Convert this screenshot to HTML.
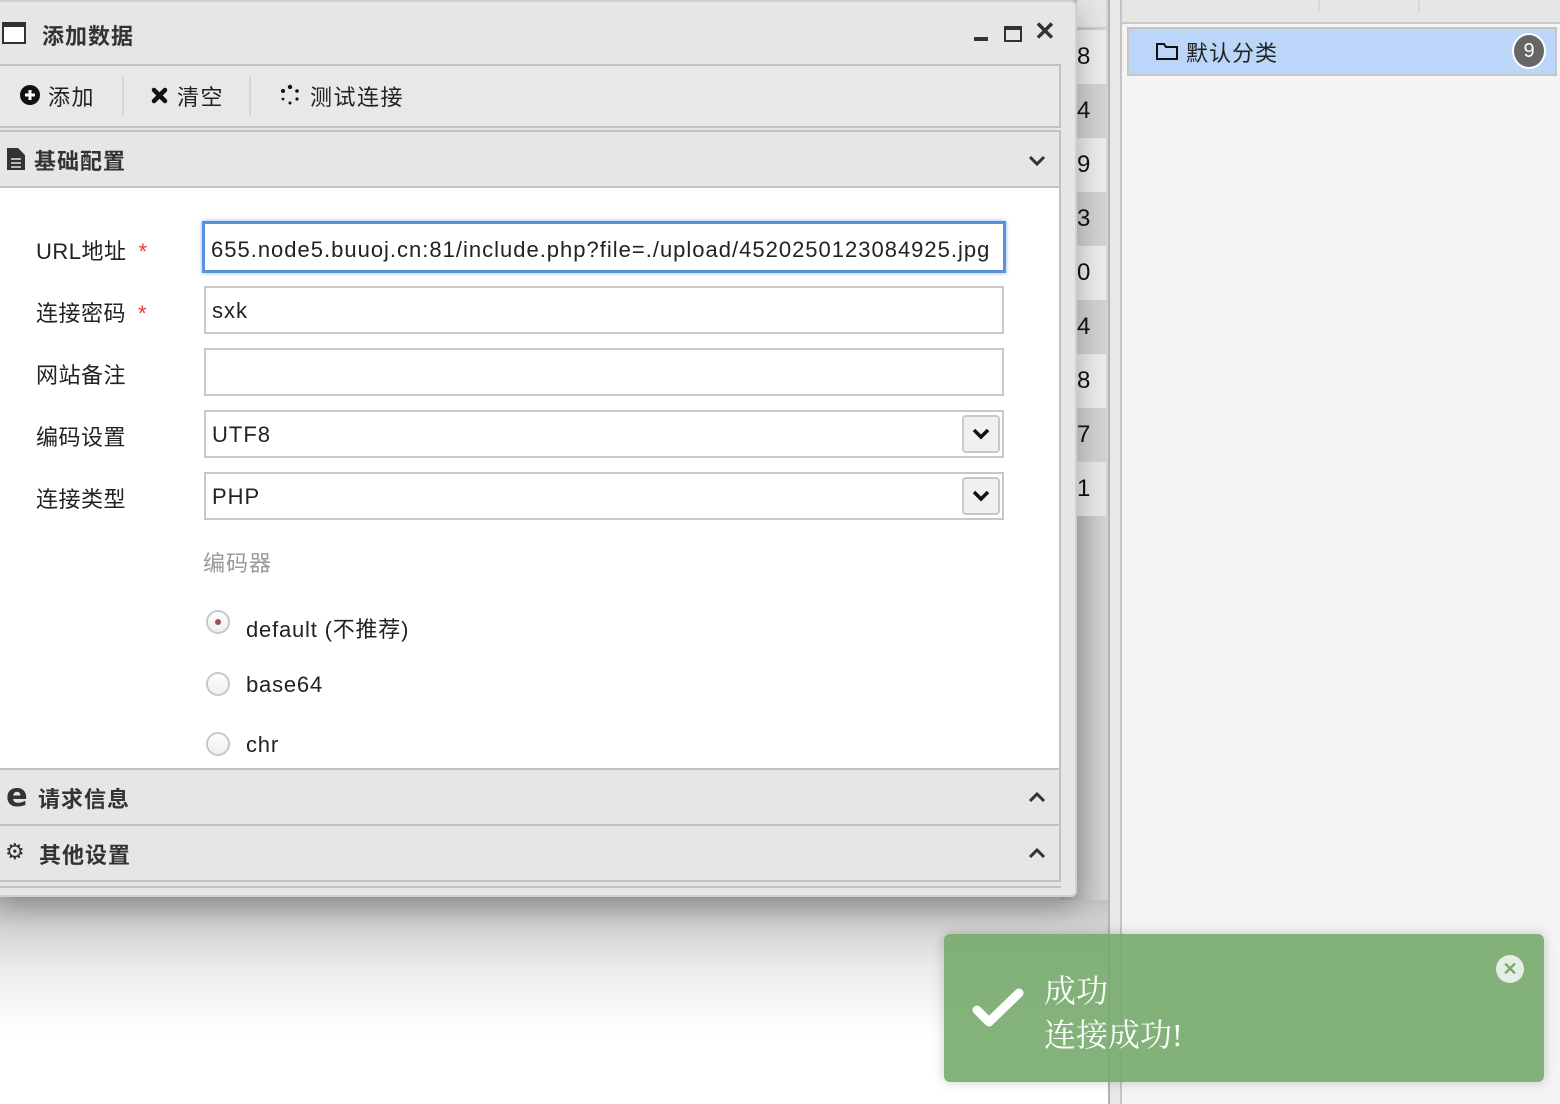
<!DOCTYPE html>
<html><head><meta charset="utf-8"><style>
*{box-sizing:border-box;margin:0;padding:0}
body{width:1560px;height:1104px;overflow:hidden;position:relative;background:#fff;font-family:"Liberation Sans","Noto Sans CJK SC",sans-serif;color:#222}
.a{position:absolute}
.lbl{position:absolute;left:36px;font-size:22px;color:#222;letter-spacing:0.5px}
.star{color:#e53935;margin-left:12px}
.inp{position:absolute;left:204px;width:800px;height:48px;border:2px solid #c8c8c8;background:#fff;font-size:22px;padding-left:6px;line-height:46px;white-space:nowrap;overflow:hidden;letter-spacing:1px}
.sb{position:absolute;right:2px;top:3px;width:38px;height:38px;border:2px solid #c8c8c8;border-radius:4px;background:#f0f0f0}
.radio{position:absolute;left:206px;width:24px;height:24px;border-radius:50%;border:2px solid #c8c8c8;background:linear-gradient(#fff,#eee)}
.rt{position:absolute;left:246px;font-size:22px;letter-spacing:0.8px}
.hdr{position:absolute;left:0;width:1061px;background:#e6e6e6;border:2px solid #c2c2c2;border-left:none}
</style></head><body>
<div class="a" style="left:0;top:880px;width:1108px;height:224px;background:linear-gradient(#b8b8b8,#ececec 40%,#fff 70%)"></div>
<div class="a" style="left:1060px;top:0;width:48px;height:900px;background:linear-gradient(90deg,#b0b0b0,#d6d6d6)"></div>
<div class="a" style="left:1077px;top:0;width:29px;height:28px;background:#e6e6e6;border-bottom:1px solid #ccc"></div>
<div class="a" style="left:1077px;top:30px;width:29px;height:480px;font-size:24px;line-height:54px;color:#111">
<div style="background:#ececec">8</div><div style="background:#d2d2d2">4</div><div style="background:#ececec">9</div><div style="background:#d2d2d2">3</div><div style="background:#ececec">0</div><div style="background:#d2d2d2">4</div><div style="background:#ececec">8</div><div style="background:#d2d2d2">7</div><div style="background:#e8e8e8">1</div>
</div>
<div class="a" style="left:1108px;top:0;width:14px;height:1104px;background:#e8e8e8;border-left:2px solid #b4b4b4;border-right:2px solid #c4c4c4"></div>
<div class="a" style="left:1122px;top:0;width:438px;height:1104px;background:#f4f4f4"></div>
<div class="a" style="left:1122px;top:0;width:438px;height:24px;background:#e6e6e6;border-bottom:2px solid #c8c8c8"></div>
<div class="a" style="left:1318px;top:0;width:2px;height:12px;background:#cdd"></div>
<div class="a" style="left:1418px;top:0;width:2px;height:12px;background:#cdd"></div>
<div class="a" style="left:1127px;top:27px;width:430px;height:49px;background:#bbd6f8;border:2px solid #c6c6c6"></div>
<svg class="a" style="left:1155px;top:41px" width="24" height="20"><path d="M2 3h7l2 3h11v12H2z" fill="none" stroke="#111" stroke-width="2"/></svg>
<div class="a" style="left:1186px;top:36px;font-size:22px;letter-spacing:1px">默认分类</div>
<div class="a" style="left:1512px;top:33px;width:34px;height:36px;border-radius:50%;background:#666;border:2px solid #fff;color:#fff;font-size:20px;text-align:center;line-height:32px">9</div>

<div class="a" style="left:-4px;top:0;width:1081px;height:897px;background:#e6e6e6;border:2px solid #d0d0d0;border-radius:0 6px 6px 0;box-shadow:0 10px 30px rgba(0,0,0,.3)"></div>
<div class="a" style="left:2px;top:22px;width:24px;height:22px;border:2px solid #333;border-top-width:5px;background:#fff"></div>
<div class="a" style="left:42px;top:19px;font-size:22px;color:#333;font-weight:bold;letter-spacing:1px">添加数据</div>
<div class="a" style="left:974px;top:37px;width:14px;height:4px;background:#333"></div>
<div class="a" style="left:1004px;top:26px;width:18px;height:16px;border:2px solid #333;border-top-width:4px"></div>
<div class="a" style="left:1034px;top:16px;font-size:26px;font-weight:bold;color:#333">✕</div>
<div class="hdr" style="top:64px;height:64px;background:#e8e8e8"></div>
<svg class="a" style="left:20px;top:85px" width="20" height="20"><circle cx="10" cy="10" r="10" fill="#111"/><path d="M10 5v10M5 10h10" stroke="#fff" stroke-width="3"/></svg>
<div class="a" style="left:48px;top:80px;font-size:22px;letter-spacing:1.5px">添加</div>
<div class="a" style="left:122px;top:76px;width:2px;height:40px;background:#cfd8de"></div>
<svg class="a" style="left:151px;top:87px" width="17" height="17"><path d="M3 3l11 11M14 3L3 14" stroke="#111" stroke-width="4.5" stroke-linecap="round"/></svg>
<div class="a" style="left:177px;top:80px;font-size:22px;letter-spacing:1.5px">清空</div>
<div class="a" style="left:249px;top:76px;width:2px;height:40px;background:#cfd8de"></div>
<svg class="a" style="left:279px;top:84px" width="22" height="22"><g fill="#111"><circle cx="11" cy="3" r="2.2"/><circle cx="18" cy="7" r="1.8"/><circle cx="18" cy="15" r="1.6"/><circle cx="11" cy="19" r="1.5"/><circle cx="4" cy="15" r="1.4"/><circle cx="4" cy="7" r="2"/></g></svg>
<div class="a" style="left:310px;top:80px;font-size:22px;letter-spacing:1.5px">测试连接</div>
<div class="hdr" style="top:130px;height:58px"></div>
<svg class="a" style="left:7px;top:148px" width="18" height="22"><path d="M0 0h11l7 7v15H0z" fill="#333"/><path d="M4 11h10M4 15h10M4 19h10" stroke="#e6e6e6" stroke-width="1.5"/></svg>
<div class="a" style="left:34px;top:144px;font-size:22px;font-weight:bold;color:#333;letter-spacing:1px">基础配置</div>
<svg class="a" style="left:1028px;top:155px" width="18" height="12"><path d="M2 2l7 7 7-7" fill="none" stroke="#333" stroke-width="3"/></svg>
<div class="a" style="left:0;top:188px;width:1061px;height:581px;background:#fff;border-right:2px solid #c2c2c2"></div>
<div class="lbl" style="top:234px">URL地址<span class="star">*</span></div>
<div class="inp" style="left:202px;top:221px;width:804px;height:52px;border:3px solid #5b8fe0;box-shadow:0 0 4px #8fb4f0;line-height:52px;padding-left:6px">655.node5.buuoj.cn:81/include.php?file=./upload/4520250123084925.jpg</div>
<div class="lbl" style="top:296px">连接密码<span class="star">*</span></div>
<div class="inp" style="top:286px">sxk</div>
<div class="lbl" style="top:358px">网站备注</div>
<div class="inp" style="top:348px"></div>
<div class="lbl" style="top:420px">编码设置</div>
<div class="inp" style="top:410px">UTF8<div class="sb"><svg width="34" height="34"><path d="M10 13l7 7 7-7" fill="none" stroke="#111" stroke-width="3.5"/></svg></div></div>
<div class="lbl" style="top:482px">连接类型</div>
<div class="inp" style="top:472px">PHP<div class="sb"><svg width="34" height="34"><path d="M10 13l7 7 7-7" fill="none" stroke="#111" stroke-width="3.5"/></svg></div></div>
<div class="a" style="left:203px;top:546px;font-size:22px;color:#999;letter-spacing:1px">编码器</div>
<div class="radio" style="top:610px"><div style="width:6px;height:6px;border-radius:50%;background:#a05050;margin:7px"></div></div>
<div class="rt" style="top:612px">default (不推荐)</div>
<div class="radio" style="top:672px"></div>
<div class="rt" style="top:672px">base64</div>
<div class="radio" style="top:732px"></div>
<div class="rt" style="top:732px">chr</div>
<div class="hdr" style="top:768px;height:58px"></div>
<div class="a" style="left:6px;top:776px;font-size:32px;font-weight:bold;color:#333;font-family:'DejaVu Sans',sans-serif">e</div>
<div class="a" style="left:38px;top:782px;font-size:22px;font-weight:bold;color:#333;letter-spacing:1px">请求信息</div>
<svg class="a" style="left:1028px;top:791px" width="18" height="12"><path d="M2 10l7-7 7 7" fill="none" stroke="#333" stroke-width="3"/></svg>
<div class="hdr" style="top:824px;height:58px"></div>
<div class="a" style="left:5px;top:840px;font-size:22px;color:#333;font-family:'DejaVu Sans',sans-serif">⚙</div>
<div class="a" style="left:39px;top:838px;font-size:22px;font-weight:bold;color:#333;letter-spacing:1px">其他设置</div>
<svg class="a" style="left:1028px;top:847px" width="18" height="12"><path d="M2 10l7-7 7 7" fill="none" stroke="#333" stroke-width="3"/></svg>
<div class="a" style="left:0;top:886px;width:1061px;height:2px;background:#c2c2c2"></div>

<div class="a" style="left:944px;top:934px;width:600px;height:148px;background:rgba(118,170,108,.9);border-radius:6px;box-shadow:0 0 12px rgba(0,0,0,.2)"></div>
<svg class="a" style="left:972px;top:988px" width="52" height="40"><path d="M5 22l12 12L47 5" fill="none" stroke="#fff" stroke-width="9" stroke-linecap="round" stroke-linejoin="round"/></svg>
<div class="a" style="left:1044px;top:966px;font-size:32px;color:#fff;font-family:'Liberation Serif','Noto Serif CJK SC',serif">成功</div>
<div class="a" style="left:1044px;top:1010px;font-size:32px;color:#fff;font-family:'Liberation Serif','Noto Serif CJK SC',serif">连接成功!</div>
<div class="a" style="left:1496px;top:955px;width:28px;height:28px;border-radius:50%;background:#e4eee2;color:#7aa870;font-size:18px;font-weight:bold;text-align:center;line-height:28px">✕</div>
</body></html>
